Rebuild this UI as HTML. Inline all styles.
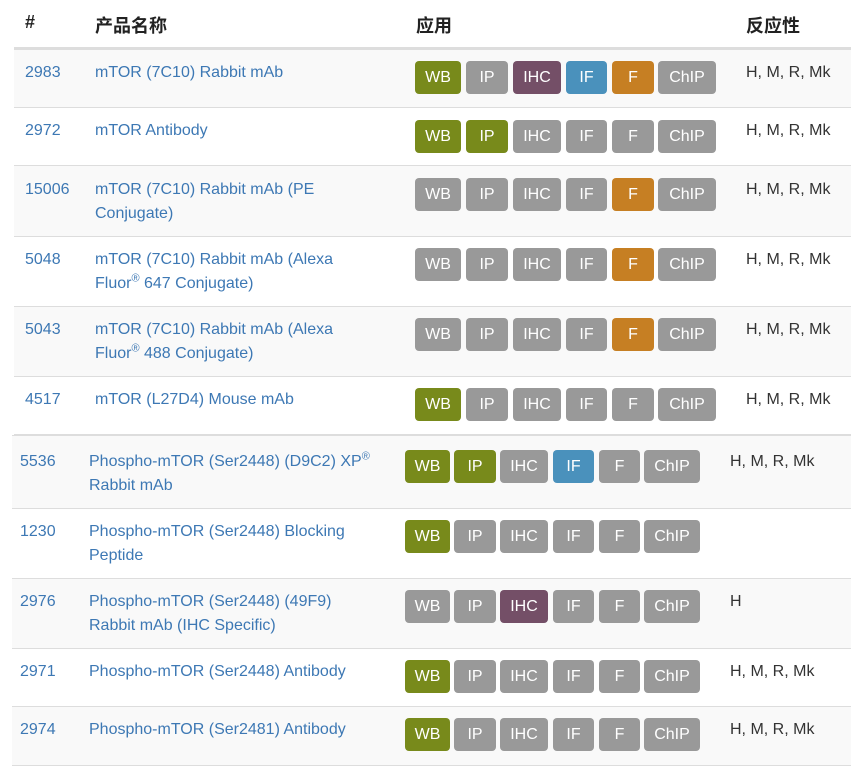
<!DOCTYPE html>
<html><head><meta charset="utf-8"><style>
*{margin:0;padding:0;box-sizing:border-box}
body{width:851px;height:771px;background:#fff;position:relative;overflow:hidden;font-family:"Liberation Sans","Noto Sans CJK SC",sans-serif;font-size:16px;color:#333}
.r{position:absolute;border-bottom:1px solid #ddd}
.s{background:#f9f9f9}
.t{position:absolute;line-height:24px;white-space:nowrap}
a{color:#3d78b4;text-decoration:none}
.b{position:absolute;height:33px;border-radius:4px;color:#fff;text-align:center;line-height:33px;font-size:16px;background:#999}
.g{background:#788a1b}.p{background:#744f67}.bl{background:#4a91bc}.o{background:#c67f23}
h{position:absolute;font-weight:bold;font-size:18px;color:#222;top:12px}
sup{font-size:11px;line-height:0}
</style></head><body>
<h style="left:25px">#</h><h style="left:95px">产品名称</h><h style="left:416px">应用</h><h style="left:746px">反应性</h>
<div style="position:absolute;left:14px;top:47px;width:837px;height:3px;background:#ddd"></div>

<div class="r s" style="left:14px;top:50px;width:837px;height:58px"></div>
<div class="r" style="left:14px;top:108px;width:837px;height:58px"></div>
<div class="r s" style="left:14px;top:166px;width:837px;height:71px"></div>
<div class="r" style="left:14px;top:237px;width:837px;height:70px"></div>
<div class="r s" style="left:14px;top:307px;width:837px;height:70px"></div>
<div class="r" style="left:14px;top:377px;width:837px;height:58px"></div>
<div class="r s" style="left:12px;top:435px;width:839px;height:74px;border-top:1px solid #ddd"></div>
<div class="r" style="left:12px;top:509px;width:839px;height:70px"></div>
<div class="r s" style="left:12px;top:579px;width:839px;height:70px"></div>
<div class="r" style="left:12px;top:649px;width:839px;height:58px"></div>
<div class="r s" style="left:12px;top:707px;width:839px;height:59px"></div>

<!-- top rows -->
<div class="t" style="left:25px;top:61px"><a>2983</a></div><div class="t" style="left:95px;top:61px"><a>mTOR (7C10) Rabbit mAb</a></div><div class="t" style="left:746px;top:61px">H, M, R, Mk</div>
<div class="t" style="left:25px;top:119px"><a>2972</a></div><div class="t" style="left:95px;top:119px"><a>mTOR Antibody</a></div><div class="t" style="left:746px;top:119px">H, M, R, Mk</div>
<div class="t" style="left:25px;top:178px"><a>15006</a></div><div class="t" style="left:95px;top:178px"><a>mTOR (7C10) Rabbit mAb (PE<br>Conjugate)</a></div><div class="t" style="left:746px;top:178px">H, M, R, Mk</div>
<div class="t" style="left:25px;top:248px"><a>5048</a></div><div class="t" style="left:95px;top:248px"><a>mTOR (7C10) Rabbit mAb (Alexa<br>Fluor<sup>®</sup> 647 Conjugate)</a></div><div class="t" style="left:746px;top:248px">H, M, R, Mk</div>
<div class="t" style="left:25px;top:318px"><a>5043</a></div><div class="t" style="left:95px;top:318px"><a>mTOR (7C10) Rabbit mAb (Alexa<br>Fluor<sup>®</sup> 488 Conjugate)</a></div><div class="t" style="left:746px;top:318px">H, M, R, Mk</div>
<div class="t" style="left:25px;top:388px"><a>4517</a></div><div class="t" style="left:95px;top:388px"><a>mTOR (L27D4) Mouse mAb</a></div><div class="t" style="left:746px;top:388px">H, M, R, Mk</div>

<!-- bottom rows -->
<div class="t" style="left:20px;top:450px"><a>5536</a></div><div class="t" style="left:89px;top:450px"><a>Phospho-mTOR (Ser2448) (D9C2) XP<sup>®</sup><br>Rabbit mAb</a></div><div class="t" style="left:730px;top:450px">H, M, R, Mk</div>
<div class="t" style="left:20px;top:520px"><a>1230</a></div><div class="t" style="left:89px;top:520px"><a>Phospho-mTOR (Ser2448) Blocking<br>Peptide</a></div>
<div class="t" style="left:20px;top:590px"><a>2976</a></div><div class="t" style="left:89px;top:590px"><a>Phospho-mTOR (Ser2448) (49F9)<br>Rabbit mAb (IHC Specific)</a></div><div class="t" style="left:730px;top:590px">H</div>
<div class="t" style="left:20px;top:660px"><a>2971</a></div><div class="t" style="left:89px;top:660px"><a>Phospho-mTOR (Ser2448) Antibody</a></div><div class="t" style="left:730px;top:660px">H, M, R, Mk</div>
<div class="t" style="left:20px;top:718px"><a>2974</a></div><div class="t" style="left:89px;top:718px"><a>Phospho-mTOR (Ser2481) Antibody</a></div><div class="t" style="left:730px;top:718px">H, M, R, Mk</div>

<!-- badges top (x: 415,466,513,566,612,658) -->
<div style="position:absolute;left:0;top:61px">
<div class="b g" style="left:415px;width:46px">WB</div><div class="b" style="left:466px;width:42px">IP</div><div class="b p" style="left:513px;width:48px">IHC</div><div class="b bl" style="left:566px;width:41px">IF</div><div class="b o" style="left:612px;width:42px">F</div><div class="b" style="left:658px;width:58px">ChIP</div></div>
<div style="position:absolute;left:0;top:120px">
<div class="b g" style="left:415px;width:46px">WB</div><div class="b g" style="left:466px;width:42px">IP</div><div class="b" style="left:513px;width:48px">IHC</div><div class="b" style="left:566px;width:41px">IF</div><div class="b" style="left:612px;width:42px">F</div><div class="b" style="left:658px;width:58px">ChIP</div></div>
<div style="position:absolute;left:0;top:178px">
<div class="b" style="left:415px;width:46px">WB</div><div class="b" style="left:466px;width:42px">IP</div><div class="b" style="left:513px;width:48px">IHC</div><div class="b" style="left:566px;width:41px">IF</div><div class="b o" style="left:612px;width:42px">F</div><div class="b" style="left:658px;width:58px">ChIP</div></div>
<div style="position:absolute;left:0;top:248px">
<div class="b" style="left:415px;width:46px">WB</div><div class="b" style="left:466px;width:42px">IP</div><div class="b" style="left:513px;width:48px">IHC</div><div class="b" style="left:566px;width:41px">IF</div><div class="b o" style="left:612px;width:42px">F</div><div class="b" style="left:658px;width:58px">ChIP</div></div>
<div style="position:absolute;left:0;top:318px">
<div class="b" style="left:415px;width:46px">WB</div><div class="b" style="left:466px;width:42px">IP</div><div class="b" style="left:513px;width:48px">IHC</div><div class="b" style="left:566px;width:41px">IF</div><div class="b o" style="left:612px;width:42px">F</div><div class="b" style="left:658px;width:58px">ChIP</div></div>
<div style="position:absolute;left:0;top:388px">
<div class="b g" style="left:415px;width:46px">WB</div><div class="b" style="left:466px;width:42px">IP</div><div class="b" style="left:513px;width:48px">IHC</div><div class="b" style="left:566px;width:41px">IF</div><div class="b" style="left:612px;width:42px">F</div><div class="b" style="left:658px;width:58px">ChIP</div></div>

<!-- badges bottom (x: 405,454,500,553,599,644) -->
<div style="position:absolute;left:0;top:450px">
<div class="b g" style="left:405px;width:45px">WB</div><div class="b g" style="left:454px;width:42px">IP</div><div class="b" style="left:500px;width:48px">IHC</div><div class="b bl" style="left:553px;width:41px">IF</div><div class="b" style="left:599px;width:41px">F</div><div class="b" style="left:644px;width:56px">ChIP</div></div>
<div style="position:absolute;left:0;top:520px">
<div class="b g" style="left:405px;width:45px">WB</div><div class="b" style="left:454px;width:42px">IP</div><div class="b" style="left:500px;width:48px">IHC</div><div class="b" style="left:553px;width:41px">IF</div><div class="b" style="left:599px;width:41px">F</div><div class="b" style="left:644px;width:56px">ChIP</div></div>
<div style="position:absolute;left:0;top:590px">
<div class="b" style="left:405px;width:45px">WB</div><div class="b" style="left:454px;width:42px">IP</div><div class="b p" style="left:500px;width:48px">IHC</div><div class="b" style="left:553px;width:41px">IF</div><div class="b" style="left:599px;width:41px">F</div><div class="b" style="left:644px;width:56px">ChIP</div></div>
<div style="position:absolute;left:0;top:660px">
<div class="b g" style="left:405px;width:45px">WB</div><div class="b" style="left:454px;width:42px">IP</div><div class="b" style="left:500px;width:48px">IHC</div><div class="b" style="left:553px;width:41px">IF</div><div class="b" style="left:599px;width:41px">F</div><div class="b" style="left:644px;width:56px">ChIP</div></div>
<div style="position:absolute;left:0;top:718px">
<div class="b g" style="left:405px;width:45px">WB</div><div class="b" style="left:454px;width:42px">IP</div><div class="b" style="left:500px;width:48px">IHC</div><div class="b" style="left:553px;width:41px">IF</div><div class="b" style="left:599px;width:41px">F</div><div class="b" style="left:644px;width:56px">ChIP</div></div>
</body></html>
